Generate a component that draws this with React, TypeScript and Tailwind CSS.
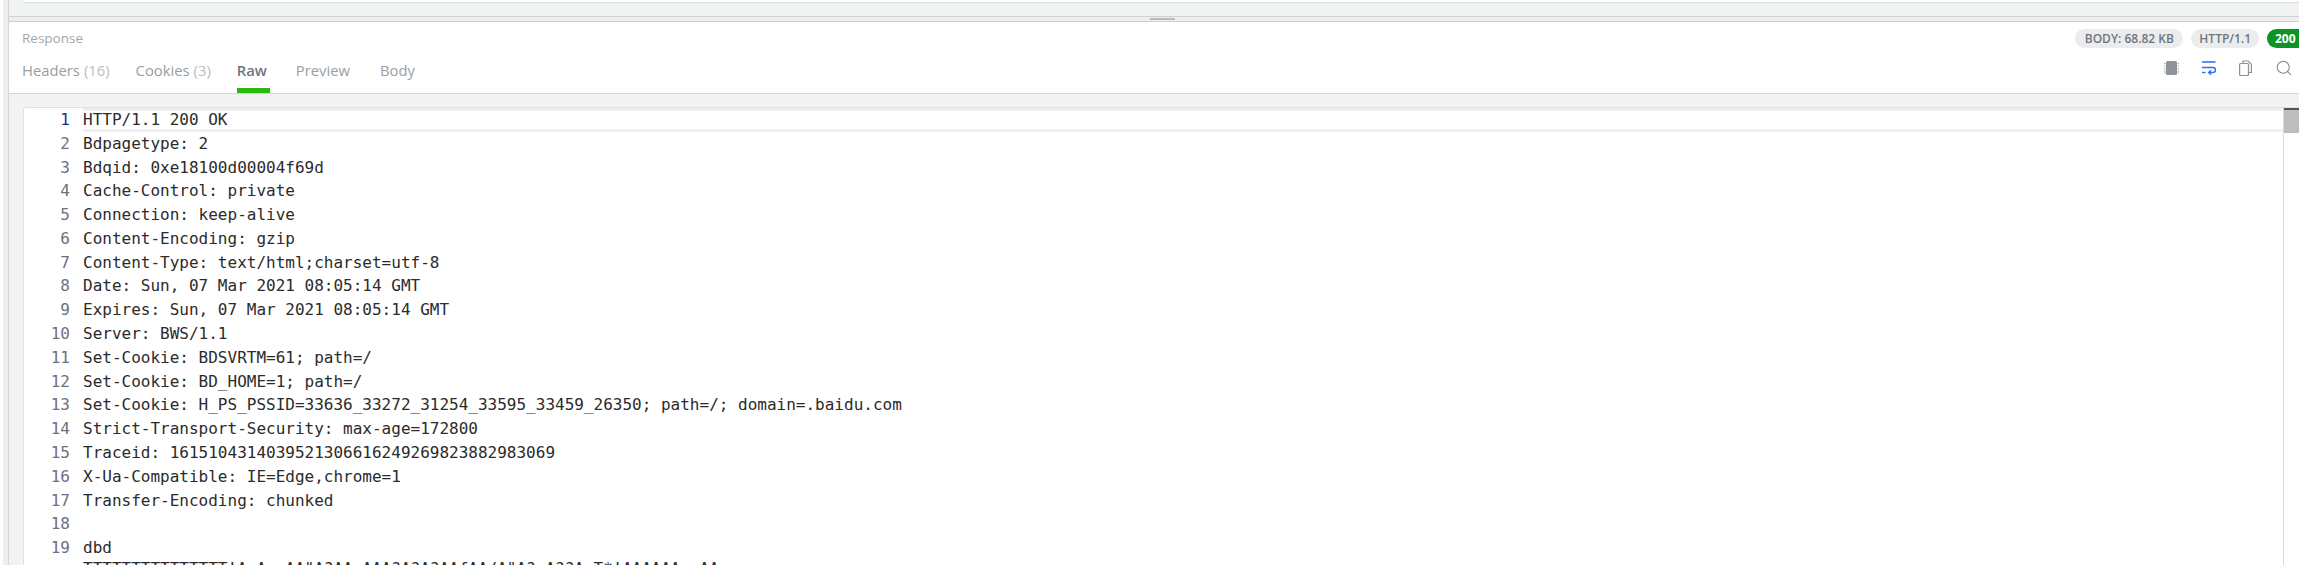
import React from 'react';
import { Search } from 'lucide-react';

const LINES = [
  'HTTP/1.1 200 OK',
  'Bdpagetype: 2',
  'Bdqid: 0xe18100d00004f69d',
  'Cache-Control: private',
  'Connection: keep-alive',
  'Content-Encoding: gzip',
  'Content-Type: text/html;charset=utf-8',
  'Date: Sun, 07 Mar 2021 08:05:14 GMT',
  'Expires: Sun, 07 Mar 2021 08:05:14 GMT',
  'Server: BWS/1.1',
  'Set-Cookie: BDSVRTM=61; path=/',
  'Set-Cookie: BD_HOME=1; path=/',
  'Set-Cookie: H_PS_PSSID=33636_33272_31254_33595_33459_26350; path=/; domain=.baidu.com',
  'Strict-Transport-Security: max-age=172800',
  'Traceid: 1615104314039521306616249269823882983069',
  'X-Ua-Compatible: IE=Edge,chrome=1',
  'Transfer-Encoding: chunked',
  '',
  'dbd',
  'TTTTTTTTTTTTTTT!A A  AA"A?AA AAA?A?A?AAfAA/A"A? A??A T*!AAAAAA  AA',
];

const TABS = [
  { label: 'Headers', count: '(16)' },
  { label: 'Cookies', count: '(3)' },
  { label: 'Raw' },
  { label: 'Preview' },
  { label: 'Body' },
];

const App: React.FC = () => {
  return (
    <div className="h-[565px] w-[2299px] overflow-hidden bg-white flex font-['Open_Sans',sans-serif]">
      {/* left gutter */}
      <div className="w-[3px] shrink-0 bg-white" />
      <div className="w-[6px] shrink-0 bg-[#eef0f0] border-r border-[#d4d6d6]" />

      <div className="flex-1 min-w-0 flex flex-col">
        {/* request pane leftovers */}
        <div className="h-[17px] shrink-0 bg-[#f2f4f4] border-b border-[#cfd1d1] pl-[14px]">
          <div className="h-[3px] bg-white border-b border-[#d8dddc] rounded-bl-[3px]" />
        </div>
        {/* drag handle */}
        <div className="h-[5px] shrink-0 bg-[#efedef] border-b border-[#d0cdd0] flex justify-center pl-[17px]">
          <div className="h-[2px] w-[25px] mt-[1px] bg-[#bdb5bf]" />
        </div>

        {/* response header */}
        <div className="h-[72px] shrink-0 flex flex-col border-b border-[#d4d6d6]">
          <div className="h-[33px] flex items-center justify-between pl-[13px]">
            <span className="text-[13.5px] text-[#a3a7ab]">Response</span>
            <div className="flex items-center gap-[8px] text-[12px] font-semibold">
              <span className="h-[19px] px-[9.5px] rounded-full bg-[#ebecee] text-[#71767c] flex items-center">BODY: 68.82 KB</span>
              <span className="h-[19px] px-[8px] rounded-full bg-[#ebecee] text-[#71767c] flex items-center">HTTP/1.1</span>
              <span className="h-[19px] w-[32px] pl-[8px] rounded-l-full bg-[#0e9326] text-white font-bold flex items-center">200</span>
            </div>
          </div>
          <div className="flex-1 flex items-stretch justify-between pl-[13px]">
            <div className="flex gap-[26px] text-[14.8px] text-[#9a9ea3]">
              {TABS.map((t) => (
                <div
                  key={t.label}
                  className={
                    t.label === 'Raw'
                      ? 'w-[33px] flex items-center pb-[2px] font-semibold text-[#70757b] border-b-[5px] border-[#2bba0c]'
                      : t.label === 'Preview'
                        ? 'pr-[4px] flex items-center pb-[2px] border-b-[5px] border-transparent'
                        : 'flex items-center pb-[2px] border-b-[5px] border-transparent'
                  }
                >
                  {t.label}
                  {t.count && <span className="ml-[4px] text-[#b9bdc1]">{t.count}</span>}
                </div>
              ))}
            </div>
            <div className="flex items-center gap-[23px] pr-[6px] pb-[12px]">
              <svg width="15" height="16" viewBox="0 0 15 16">
                <rect x="2" y="1" width="11" height="14" rx="1.5" fill="#8f9299" />
                <path d="M0 3.5h1.5M0 6h1.5M0 8.5h1.5M0 11h1.5M0 13h1.5M13.5 3.5h1.5M13.5 6h1.5M13.5 8.5h1.5M13.5 11h1.5M13.5 13h1.5" stroke="#a6a9ae" strokeWidth="1" />
              </svg>
              <svg width="14" height="14" viewBox="0 0 14 14" fill="none" stroke="#2f6bf0" strokeWidth="1.4">
                <path d="M0 1h13.5M0 6.5h11a2.5 2.5 0 0 1 0 5H7" />
                <path d="M9 9.2 6.6 11.5 9 13.8" />
                <path d="M0 11.5h3.5" />
              </svg>
              <svg width="13" height="16" viewBox="0 0 13 16" fill="none" stroke="#8e9196" strokeWidth="1.2">
                <path d="M4 3V1h5l3.4 3.2V12.500H9.500" />
                <rect x="0.600" y="3.500" width="8.900" height="12" rx="1" />
              </svg>
              <Search size={18} strokeWidth={1.4} color="#85888d" />
            </div>
          </div>
        </div>

        {/* editor */}
        <div className="flex-1 min-h-0 bg-[#f2f4f4] pt-[13px] pl-[14px]">
          <div className="h-full bg-white border-t border-l border-[#dfe1e1] rounded-tl-[3px] flex overflow-hidden relative">
            <div className="flex-1 min-w-0 font-['DejaVu_Sans_Mono',monospace] text-[16px]">
              {LINES.map((line, i) => (
                <div key={i} className="h-[23.8px] flex items-center relative whitespace-pre text-[#2b2b2b]">
                  {i === 0 && <div className="absolute left-[59px] right-0 top-0 h-[24px] border-y-[3px] border-[#efefef]" />}
                  <span className={i === 0 ? 'w-[46px] text-right text-[#1d2f8f]' : 'w-[46px] text-right text-[#6e7180]'}>{i === 19 ? '' : i + 1}</span>
                  {/* last row is cut by the window, only the glyph tops show */}
                  <span className={i === 19 ? 'ml-[13px] relative -top-[3px]' : 'ml-[13px] relative'}>{line}</span>
                </div>
              ))}
            </div>
            {/* scrollbar */}
            <div className="w-[16px] shrink-0 border-l border-[#d8d8d8] bg-white">
              <div className="h-[25px] bg-[#bdbdbb] border-t-2 border-[#555555]" />
            </div>
          </div>
        </div>
      </div>
    </div>
  );
};

export default App;
